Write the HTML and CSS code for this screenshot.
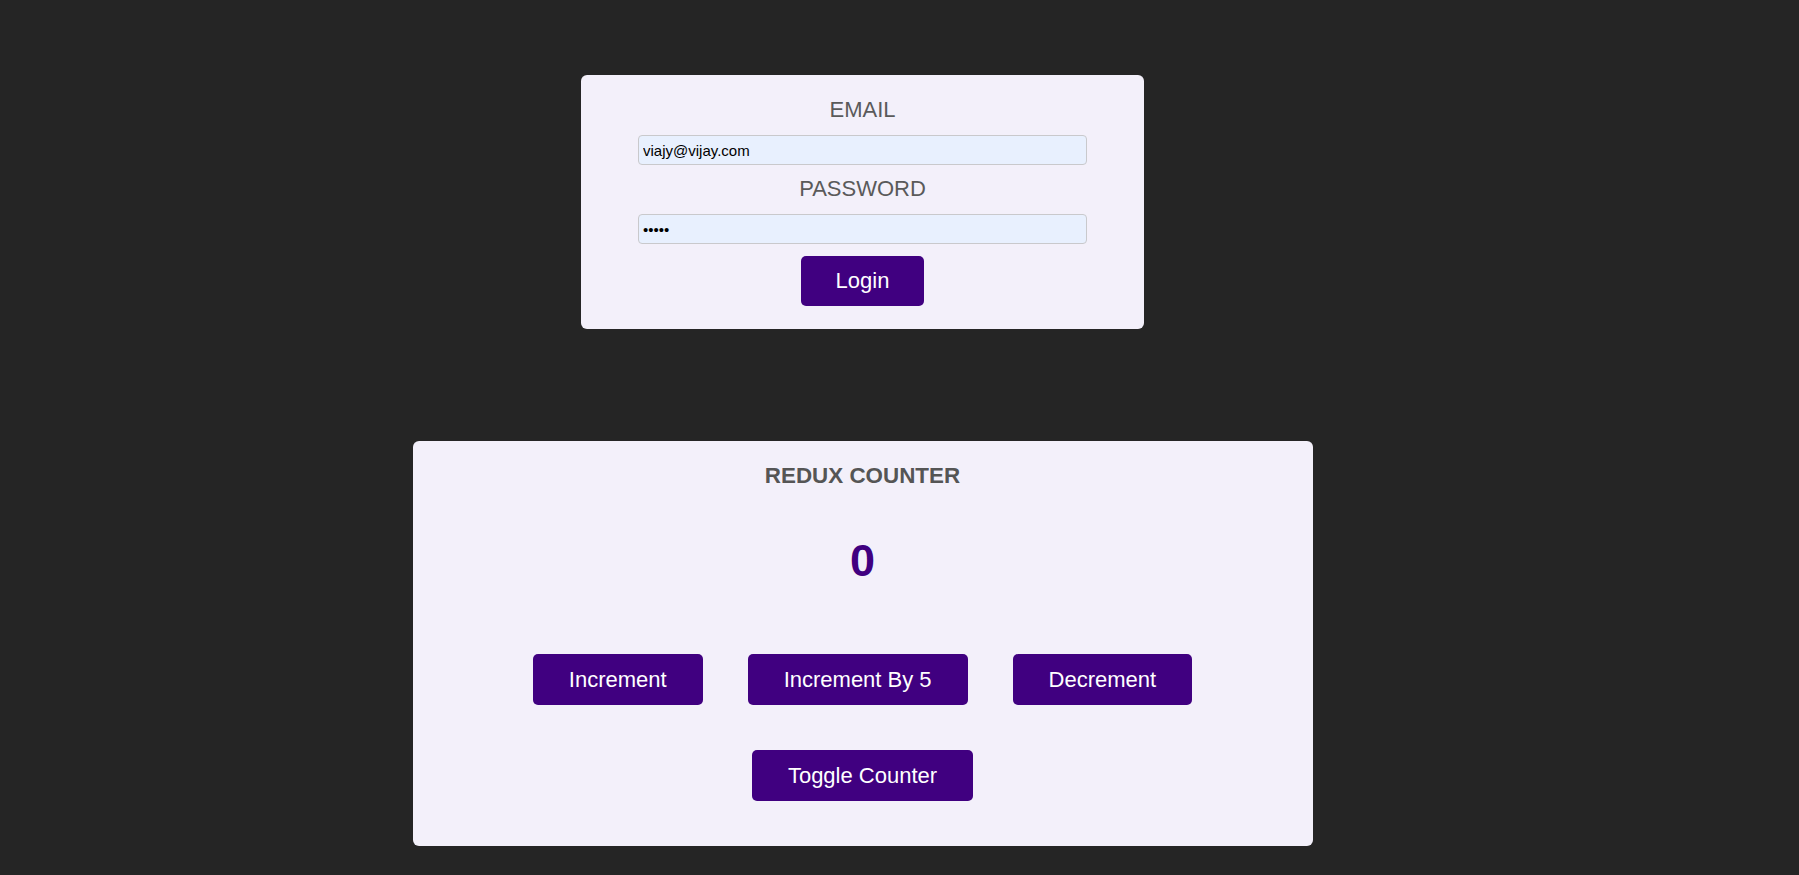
FILE: index.html
```html
<!DOCTYPE html>
<html lang="en">
<head>
<meta charset="utf-8">
<title>Redux Counter</title>
<link rel="stylesheet" href="styles.css">
</head>
<body>
<main class="page">
  <form class="login-card">
    <label class="field-label" for="email">EMAIL</label>
    <input class="field-input" id="email" type="email" value="viajy@vijay.com">
    <label class="field-label" for="password">PASSWORD</label>
    <input class="field-input" id="password" type="password" value="12345">
    <button class="btn btn-login" type="button">Login</button>
  </form>

  <section class="counter-card">
    <h1 class="counter-title">REDUX COUNTER</h1>
    <div class="counter-value">0</div>
    <div class="counter-actions">
      <button class="btn" type="button">Increment</button>
      <button class="btn" type="button">Increment By 5</button>
      <button class="btn" type="button">Decrement</button>
    </div>
    <button class="btn btn-toggle" type="button">Toggle Counter</button>
  </section>
</main>
</body>
</html>
```

FILE: styles.css
```css
html, body {
  margin: 0;
  padding: 0;
}

body {
  background: #252525;
  font-family: "Liberation Sans", Arial, sans-serif;
  min-height: 875px;
}

.page {
  width: 1725px;
  display: flex;
  flex-direction: column;
  align-items: center;
  padding-top: 75px;
}

.login-card {
  width: 563px;
  box-sizing: border-box;
  margin: 0;
  padding: 22px 57px 23px;
  background: #f3f0fa;
  border-radius: 6px;
  display: flex;
  flex-direction: column;
  align-items: center;
}

.field-label {
  font-size: 22px;
  line-height: 25px;
  color: #5a5a5a;
  margin-bottom: 13px;
}

.field-input {
  width: 100%;
  height: 30px;
  box-sizing: border-box;
  margin: 0 0 11px;
  padding: 0 4px;
  border: 1px solid #c9c9cc;
  border-radius: 4px;
  background: #e8f0fe;
  font-family: "Liberation Sans", Arial, sans-serif;
  font-size: 15px;
  color: #000;
}

#password {
  margin-bottom: 12px;
}

.btn {
  border: none;
  border-radius: 5px;
  background: #400080;
  color: #ffffff;
  font-family: "Liberation Sans", Arial, sans-serif;
  font-size: 22px;
  line-height: 25px;
  padding: 13px 36px;
  cursor: pointer;
}

.btn-login {
  padding: 12px 35px 13px;
}

.counter-card {
  width: 900px;
  box-sizing: border-box;
  margin-top: 112px;
  padding: 22px 0 45px;
  background: #f3f0fa;
  border-radius: 6px;
  display: flex;
  flex-direction: column;
  align-items: center;
}

.counter-title {
  margin: 0 0 46px;
  font-size: 22.4px;
  line-height: 26px;
  font-weight: bold;
  color: #555555;
}

.counter-value {
  font-size: 45px;
  line-height: 52px;
  font-weight: bold;
  color: #400080;
  margin-bottom: 67px;
}

.counter-actions {
  display: flex;
  justify-content: center;
  gap: 45px;
  margin-bottom: 45px;
}
```
